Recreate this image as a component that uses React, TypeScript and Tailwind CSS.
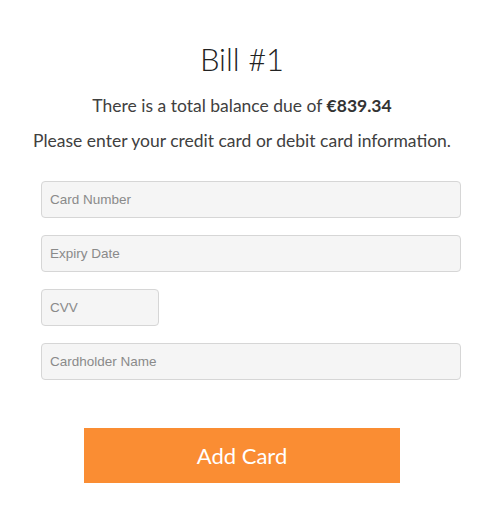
import React from "react";

const fields = [
  { name: "number", placeholder: "Card Number", width: "w-[420px]" },
  { name: "expiry", placeholder: "Expiry Date", width: "w-[420px]" },
  { name: "cvv", placeholder: "CVV", width: "w-[118px]" },
  { name: "holder", placeholder: "Cardholder Name", width: "w-[420px]" },
];

export default function App() {
  return (
    <div className="w-[484px] pt-[39px] text-center font-['Lato',sans-serif] text-[#404040] bg-white">
      <h1 className="text-[31px] leading-[40px] font-light text-[#222]">Bill #1</h1>
      <p className="mt-[15px] text-[17.5px] leading-[24px]">
        There is a total balance due of <b className="font-bold text-[#333]">€839.34</b>
      </p>
      <p className="mt-[11px] text-[17.5px] leading-[24px]">
        Please enter your credit card or debit card information.
      </p>

      <form className="mt-[28px] pl-[41px] flex flex-col items-start gap-[17px]">
        {fields.map((f) => (
          <input
            key={f.name}
            name={f.name}
            placeholder={f.placeholder}
            className={`${f.width} h-[37px] rounded-[4px] border border-[#d6d6d6] bg-[#f5f5f5] px-[8px] font-['Liberation_Sans',Arial,sans-serif] text-[13.5px] text-[#333] placeholder:text-[#8a8a8a] outline-none`}
          />
        ))}
      </form>

      <button
        type="button"
        className="block mx-auto mt-[48px] w-[316px] h-[55px] bg-[#fa8d33] text-white text-[22px] font-['Lato',sans-serif]"
      >
        Add Card
      </button>
    </div>
  );
}
